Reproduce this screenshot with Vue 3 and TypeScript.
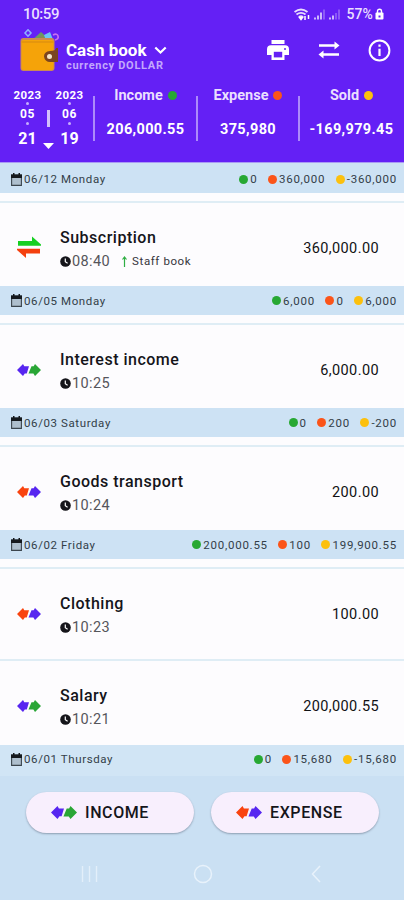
<script setup lang="ts">
type Kind = 'transfer' | 'income' | 'expense'
interface Entry { title: string; time: string; amount: string; kind: Kind; book?: string }
interface Day { date: string; income: string; expense: string; sold: string; entries: Entry[] }

const period = [
  { year: '2023', month: '05', day: '21' },
  { year: '2023', month: '06', day: '19' },
]
const totals = [
  { label: 'Income', value: '206,000.55', tone: 'green' },
  { label: 'Expense', value: '375,980', tone: 'red' },
  { label: 'Sold', value: '-169,979.45', tone: 'amber' },
]
const days: Day[] = [
  { date: '06/12 Monday', income: '0', expense: '360,000', sold: '-360,000', entries: [
    { title: 'Subscription', time: '08:40', amount: '360,000.00', kind: 'transfer', book: 'Staff book' }] },
  { date: '06/05 Monday', income: '6,000', expense: '0', sold: '6,000', entries: [
    { title: 'Interest income', time: '10:25', amount: '6,000.00', kind: 'income' }] },
  { date: '06/03 Saturday', income: '0', expense: '200', sold: '-200', entries: [
    { title: 'Goods transport', time: '10:24', amount: '200.00', kind: 'expense' }] },
  { date: '06/02 Friday', income: '200,000.55', expense: '100', sold: '199,900.55', entries: [
    { title: 'Clothing', time: '10:23', amount: '100.00', kind: 'expense' },
    { title: 'Salary', time: '10:21', amount: '200,000.55', kind: 'income' }] },
  { date: '06/01 Thursday', income: '0', expense: '15,680', sold: '-15,680', entries: [] },
]
const actions: { label: string; kind: Kind }[] = [
  { label: 'INCOME', kind: 'income' },
  { label: 'EXPENSE', kind: 'expense' },
]
</script>

<template>
  <main class="screen">
    <header class="header">
      <div class="status">
        <span class="clock">10:59</span>
        <svg class="signals" width="50" height="15" viewBox="0 0 50 15">
          <g fill="none" stroke="#fff" stroke-width="1.8" opacity=".85">
            <path d="M.500 5Q7 0 13.500 5M2.500 7.500Q7 4.300 11.500 7.500M5 10Q7 8.400 9 10" />
          </g>
          <path d="M5.500 10.500h3L7 12.500zM11 9v4M14.500 8v4" fill="#fff" stroke="#fff" stroke-width="1.500" />
          <path d="M21 12.500v-2M24 12.500v-4M27 12.500V5.500M36 12.500v-2M39 12.500v-4" stroke="#fff" stroke-width="1.700" opacity=".8" />
          <path d="M30 12.500V2.500M42 12.500V6M45 12.500V2.500" stroke="#fff" stroke-width="1.700" opacity=".3" />
        </svg>
        <span class="percent">57%</span>
        <svg class="lock" width="9" height="12" viewBox="0 0 9 12">
          <path d="M2.500 5V3.200a2 2 0 0 1 4 0V5" fill="none" stroke="#fff" stroke-width="1.400" />
          <rect x=".5" y="4.500" width="8" height="7" rx="1" fill="#fff" />
          <path d="M3.500 7.500h2v2h-2z" fill="#6420f5" />
        </svg>
      </div>

      <div class="appbar">
        <svg class="wallet" width="42" height="44" viewBox="0 0 42 44">
          <path d="M11 13L22 3l10 9z" fill="#6c9a63" />
          <path d="M15 13l8-7 6 7z" fill="#8a8b55" />
          <path d="M25 6l6-3 4 10-7 1z" fill="#6cc5f5" />
          <path d="M9 .800L12 4 9 7.200 6 4z" fill="none" stroke="#8fb2ff" stroke-width="1.500" />
          <path d="M34 6q4-2 5 1t-3 4" fill="none" stroke="#c470f0" stroke-width="1.700" />
          <rect x="1.500" y="9" width="34" height="33" rx="3" fill="#c98a55" />
          <rect x="2.500" y="11" width="32" height="30" rx="2" fill="#f5a309" />
          <path d="M2.500 12h32v2h-32z" fill="#e5960d" />
          <path d="M39 19v14h-8a6 6 0 0 1-6-5.500q0-5 6-5.500 6 0 6-3z" fill="#7a4520" />
          <circle cx="30.500" cy="27.500" r="2.500" fill="#f4e6cb" />
        </svg>
        <div class="book">
          <div class="book-name">
            <span>Cash book</span>
            <svg width="13" height="9" viewBox="0 0 13 9"><path d="M1.300 1.500l5.200 5 5.200-5" fill="none" stroke="#fff" stroke-width="2.200" /></svg>
          </div>
          <div class="currency">currency DOLLAR</div>
        </div>
        <div class="tools">
          <svg width="22" height="20" viewBox="0 0 22 20">
            <path d="M4.500 0h13v4h-13zM4 5.300h14a4 4 0 0 1 4 4V15h-4.500v5h-13v-5H0V9.300a4 4 0 0 1 4-4z" fill="#fff" />
            <path d="M6.800 11.800h8.400v5.600H6.800z" fill="#6420f5" />
            <circle cx="18" cy="9" r="1" fill="#6420f5" />
          </svg>
          <svg class="swap" width="22" height="18" viewBox="0 0 22 18">
            <path d="M1 4.500h16M5 13.500h16" stroke="#fff" stroke-width="2.400" />
            <path d="M16.500.500l5 4-5 4zM5.500 9.500l-5 4 5 4z" fill="#fff" />
          </svg>
          <svg width="23" height="23" viewBox="0 0 23 23">
            <circle cx="11.500" cy="11.500" r="9.900" fill="none" stroke="#fff" stroke-width="2" />
            <path d="M11.500 5.500v2.300M11.500 9.800v7.200" stroke="#fff" stroke-width="2.200" />
          </svg>
        </div>
      </div>

      <div class="summary">
        <div class="period">
          <template v-for="(p, i) in period" :key="i">
            <div v-if="i" class="period-mid">
              <i></i>
              <svg width="11" height="6" viewBox="0 0 11 6"><path d="M0 0h11L5.500 6z" fill="#fff" /></svg>
            </div>
            <div class="period-date">
              <span class="year">{{ p.year }}</span><b></b>
              <span class="month">{{ p.month }}</span><b></b>
              <span class="day-no">{{ p.day }}</span>
            </div>
          </template>
        </div>
        <div v-for="t in totals" :key="t.label" class="total">
          <div class="total-label">{{ t.label }}<i class="dot" :class="t.tone"></i></div>
          <div class="total-value">{{ t.value }}</div>
        </div>
      </div>
    </header>

    <section v-for="d in days" :key="d.date" class="day">
      <div class="day-bar">
        <svg width="11" height="13" viewBox="0 0 11 13">
          <path d="M.600 2h9.800v10.400H.600z" fill="#aebfcd" stroke="#3b454d" stroke-width="1.100" />
          <path d="M0 1.500h11V5H0zM2 0h1.500v2H2zM7.500 0H9v2H7.500z" fill="#15191d" />
        </svg>
        <span class="date">{{ d.date }}</span>
        <span class="figure"><i class="dot green"></i>{{ d.income }}</span>
        <span class="figure"><i class="dot red"></i>{{ d.expense }}</span>
        <span class="figure"><i class="dot amber"></i>{{ d.sold }}</span>
      </div>
      <article v-for="e in d.entries" :key="e.title" class="entry">
        <svg v-if="e.kind === 'transfer'" class="mark tall" width="24" height="23" viewBox="0 0 24 23">
          <path d="M1 5h14V.500L24 8.500v1.300H1z" fill="#16cf22" />
          <path d="M23 17.500H9V22L0 14v-1.300h23z" fill="#f4400f" />
        </svg>
        <svg v-else class="mark" :class="e.kind" width="24" height="12" viewBox="0 0 24 12">
          <path class="left" d="M0 6L6 0l1.300 2.200H12L9.800 9.400H7.800L6 12z" />
          <path class="right" d="M24 6L18 0l-1.300 2.200H14.500L11.500 9.600H16.400L18 12z" />
        </svg>
        <div class="info">
          <div class="title">{{ e.title }}</div>
          <div class="meta">
            <svg width="11" height="11" viewBox="0 0 11 11">
              <circle cx="5.500" cy="5.500" r="5.300" fill="#15151a" />
              <path d="M5.300 2.500v3.200l2.300 1.500" fill="none" stroke="#fff" stroke-width="1.200" />
            </svg>
            <span class="time">{{ e.time }}</span>
            <template v-if="e.book">
              <svg class="up" width="5" height="11" viewBox="0 0 5 11"><path d="M2.500 11V1.500M.500 3.500l2-2.500 2 2.500" fill="none" stroke="#2fae43" stroke-width="1.200" /></svg>
              <span class="staff">{{ e.book }}</span>
            </template>
          </div>
        </div>
        <div class="amount">{{ e.amount }}</div>
      </article>
    </section>

    <footer class="footer">
      <div class="actions">
        <button v-for="a in actions" :key="a.label" type="button">
          <svg :class="a.kind" width="26" height="13" viewBox="0 0 24 12">
            <path class="left" d="M0 6L6 0l1.300 2.200H12L9.800 9.400H7.800L6 12z" />
            <path class="right" d="M24 6L18 0l-1.300 2.200H14.500L11.500 9.600H16.400L18 12z" />
          </svg>
          <span>{{ a.label }}</span>
        </button>
      </div>
      <nav class="nav">
        <svg width="18" height="16" viewBox="0 0 18 16"><path d="M1.500 0v16M8.500 0v16M15.500 0v16" stroke="#e3effa" stroke-width="1.400" /></svg>
        <svg class="home" width="20" height="20" viewBox="0 0 20 20"><circle cx="10" cy="10" r="8.500" fill="none" stroke="#e8f2fb" stroke-width="1.500" /></svg>
        <svg width="10" height="18" viewBox="0 0 10 18"><path d="M9 1L1.500 9 9 17" fill="none" stroke="#e8f2fb" stroke-width="1.500" /></svg>
      </nav>
    </footer>
  </main>
</template>

<style>
body { margin: 0; }
</style>

<style scoped>
.screen {
  width: 404px;
  height: 900px;
  overflow: hidden;
  display: flex;
  flex-direction: column;
  background: #fdfcfe;
  font-family: Roboto, "Liberation Sans", sans-serif;
  color: #15151a;
}
svg { display: block; flex: none; }
.header {
  flex: none;
  height: 163px;
  box-sizing: border-box;
  background: #6420f5;
  border-bottom: 1px solid #a99af4;
  color: #fff;
  display: flex;
  flex-direction: column;
}
.status {
  height: 28px;
  box-sizing: border-box;
  padding: 0 20px 0 23px;
  display: flex;
  align-items: center;
  color: #eadfff;
}
.clock { font-size: 15px; flex: 1; line-height: 28px; letter-spacing: -.4px; font-weight: 500; }
.signals { margin-right: 2px; }
.percent { font-size: 14px; font-weight: 500; letter-spacing: .1px; }
.lock { margin-left: 2px; }
.appbar {
  height: 48px;
  display: flex;
  align-items: flex-start;
  padding: 0 13px 0 19px;
}
.wallet { margin-top: 1px; }
.book { flex: 1; padding: 13px 0 0 5px; }
.book-name { display: flex; align-items: center; gap: 7px; font-size: 17px; line-height: 19px; font-weight: 700; }
.currency { font-size: 11px; line-height: 12px; font-weight: 700; color: #c3a8fc; letter-spacing: .7px; }
.tools { height: 44px; display: flex; align-items: center; gap: 28.5px; }
.summary {
  flex: 1;
  display: grid;
  grid-template-columns: 94px 103px 102px 105px;
}
.period { display: flex; padding: 14px 0 0 11px; }
.period-date { width: 33px; display: flex; flex-direction: column; align-items: center; font-weight: 700; }
.period-date b { width: 3px; height: 3px; border-radius: 50%; background: #c6adfd; margin: 2px 0; }
.year { font-size: 11.5px; line-height: 10px; letter-spacing: .4px; }
.month { font-size: 12px; line-height: 12px; letter-spacing: .6px; margin-top: 1px; }
.day-no { font-size: 16px; line-height: 18px; margin-top: 3px; }
.period-mid { width: 9px; display: flex; flex-direction: column; align-items: center; padding-top: 20px; }
.period-mid i { width: 3px; height: 17px; background: #d3bffc; }
.period-mid svg { margin-top: 16px; }
.total { position: relative; padding-top: 11px; text-align: center; font-weight: 700; }
.total::before {
  content: "";
  position: absolute;
  left: -1px;
  top: 20px;
  width: 2px;
  height: 45px;
  background: #ac8afa;
}
.total-label { display: flex; justify-content: center; align-items: center; gap: 5px; font-size: 14.5px; line-height: 17px; color: #eadfff; }
.total-value { font-size: 14.5px; line-height: 18px; margin-top: 17px; letter-spacing: .35px; }
.dot { display: block; flex: none; width: 9px; height: 9px; border-radius: 50%; }
.green { background: #27a833; }
.red { background: #fb5419; }
.amber { background: #fcc00d; }

.day { flex: none; }
.day-bar {
  height: 29px;
  box-sizing: border-box;
  background: #cde2f4;
  display: flex;
  align-items: center;
  padding: 0 7px 0 11px;
  font-size: 11.5px;
  letter-spacing: .6px;
  color: #333e48;
}
.day:first-of-type .day-bar { height: 30px; padding-top: 2px; }
.day:last-of-type .day-bar { height: 31px; padding-bottom: 3px; background: #d1e5f5; }
.date { flex: 1; padding-left: 2px; }
.figure { display: flex; align-items: center; gap: 2px; margin-left: 10.5px; letter-spacing: .75px; }
.entry {
  margin-top: 8px;
  height: 85px;
  box-sizing: border-box;
  border-top: 2px solid #dfedf5;
  display: flex;
  padding: 0 25px 0 17px;
}
.entry + .entry { margin-top: 7px; height: 86px; }
.mark { width: 24px; margin-top: 39px; }
.mark.tall { margin-top: 33px; }
.income .left, .expense .right { fill: #5726f0; }
.income .right { fill: #2aa636; }
.expense .left { fill: #f9430f; }
.info { flex: 1; padding: 25px 0 0 19px; }
.title { font-size: 16px; line-height: 20px; font-weight: 500; letter-spacing: .5px; }
.meta { display: flex; align-items: center; margin-top: 4px; height: 18px; }
.time { font-size: 14.5px; letter-spacing: .4px; color: #55555b; padding-left: 1px; }
.up { margin-left: 12px; }
.staff { margin-left: 5px; font-size: 11.5px; letter-spacing: .6px; color: #36363c; }
.amount { font-size: 14.5px; line-height: 18px; letter-spacing: .4px; margin-top: 37px; color: #111114; }

.footer { flex: 1; background: #cae0f3; display: flex; flex-direction: column; }
.actions { display: flex; gap: 17px; padding: 16px 25px 0 26px; }
.actions button {
  flex: 1;
  height: 41px;
  border: 0;
  border-radius: 21px;
  background: #f8effd;
  box-shadow: 0 1px 2px rgba(50, 60, 80, .4);
  display: flex;
  align-items: center;
  padding: 0 0 0 25px;
  gap: 8px;
  font: 500 16px/20px Roboto, "Liberation Sans", sans-serif;
  letter-spacing: .6px;
  color: #15151a;
}
.nav { display: flex; justify-content: space-between; align-items: center; padding: 31px 83px 0 81px; }
.home { margin-right: 5px; }
</style>
